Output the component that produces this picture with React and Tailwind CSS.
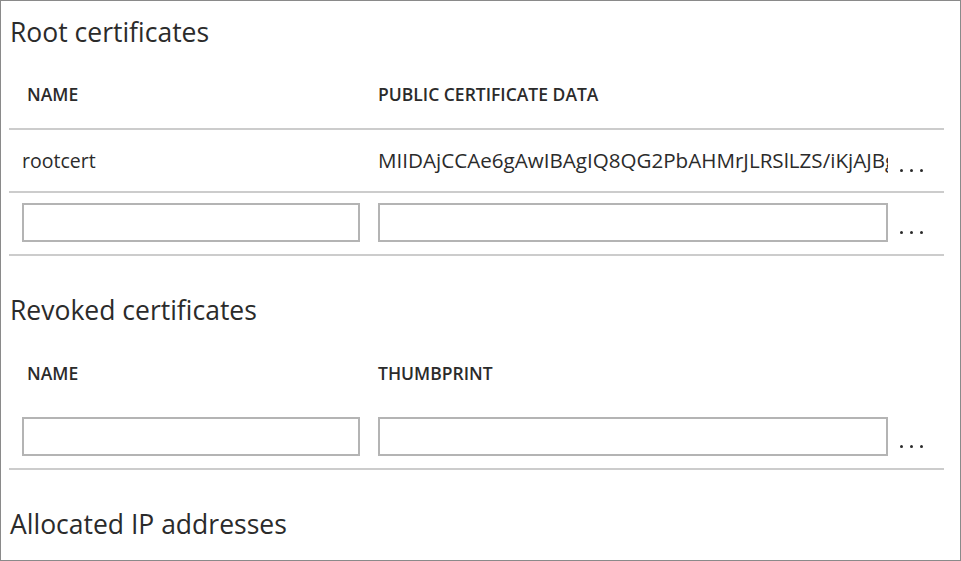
import React from 'react';

const Dots = ({ className = '' }) => (
  <div className={`flex gap-[7px] ml-[12px] ${className}`}>
    <span className="w-[3px] h-[3px] rounded-full bg-[#2b2b2b]" />
    <span className="w-[3px] h-[3px] rounded-full bg-[#2b2b2b]" />
    <span className="w-[3px] h-[3px] rounded-full bg-[#2b2b2b]" />
  </div>
);

const Divider = ({ className = '' }) => <div className={`h-[2px] bg-[#cccccc] ${className}`} />;

const FilaInputs = () => (
  <div className="flex items-end pl-[13px]">
    <input type="text" className="w-[338px] h-[39px] border-2 border-[#b4b4b4] bg-white outline-none" />
    <input type="text" className="w-[510px] h-[39px] ml-[18px] border-2 border-[#b4b4b4] bg-white outline-none" />
    <Dots className="mb-[8px]" />
  </div>
);

const Encabezado = ({ col2, className = '' }) => (
  <div className={`flex items-center pl-[13px] h-[20px] text-[17.5px] font-semibold text-[#2b2b2b] ${className}`}>
    <div className="w-[356px] pl-[5px]">NAME</div>
    <div>{col2}</div>
  </div>
);

const Titulo = ({ children, className = '' }) => (
  <h2 className={`h-[34px] flex items-center text-[26.5px] text-[#2b2b2b] ${className}`}>{children}</h2>
);

export default function App() {
  return (
    <div
      className="w-[961px] h-[561px] border border-[#8a8a8a] bg-white overflow-hidden"
      style={{ fontFamily: '"Open Sans", "Noto Sans", sans-serif' }}
    >
      <div className="ml-[8px] w-[935px]">
        {/* Root certificates */}
        <Titulo className="mt-[15px] pl-[1px]">Root certificates</Titulo>
        <Encabezado col2="PUBLIC CERTIFICATE DATA" className="mt-[34px]" />
        <Divider className="mt-[24px]" />
        <div className="flex items-center h-[61px] pl-[13px] text-[#2b2b2b]">
          <div className="w-[356px] text-[19.5px]">rootcert</div>
          <div className="w-[510px] overflow-hidden whitespace-nowrap text-[20.6px]">
            MIIDAjCCAe6gAwIBAgIQ8QG2PbAHMrJLRSlLZS/iKjAJBgUrDgMCHQUAMBgxFjAUBgNVBAMTDU15IFJvb3QgQ2VydA
          </div>
          <Dots className="mt-[20px]" />
        </div>
        <Divider />
        <div className="pt-[10px] pb-[12px]">
          <FilaInputs />
        </div>
        <Divider />

        {/* Revoked certificates */}
        <Titulo className="mt-[38px] pl-[1px]">Revoked certificates</Titulo>
        <Encabezado col2="THUMBPRINT" className="mt-[35px]" />
        <div className="pt-[34px] pb-[12px]">
          <FilaInputs />
        </div>
        <Divider />

        <Titulo className="mt-[38px] pl-[1px]">Allocated IP addresses</Titulo>
      </div>
    </div>
  );
}
